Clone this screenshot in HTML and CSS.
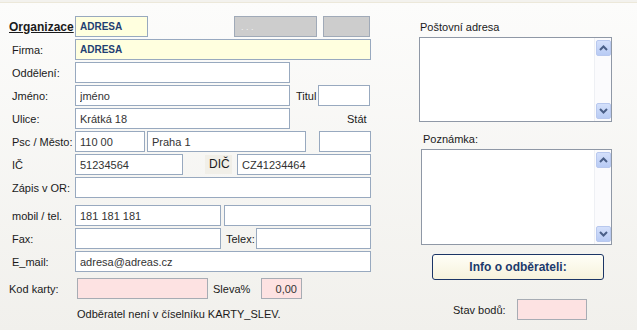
FILE: index.html
```html
<!DOCTYPE html>
<html lang="cs">
  <head>
    <meta charset="UTF-8" />
    <title>Odběratel</title>
    <link rel="stylesheet" href="styles.css">
  </head>
  <body>
    <div class="panel">
      <!-- levá část - adresa -->
      <div class="left">
        <div class="row">
          <label class="lbl lbl-main">Organizace</label>
          <input type="text" class="fld yellow w73" value="ADRESA" />
          <button class="grey-btn w83">. . .</button>
          <button class="grey-btn w47"></button>
        </div>
        <div class="row">
          <label class="lbl">Firma:</label>
          <input type="text" class="fld yellow w296" value="ADRESA" />
        </div>
        <div class="row">
          <label class="lbl">Oddělení:</label>
          <input type="text" class="fld w215" />
        </div>
        <div class="row">
          <label class="lbl">Jméno:</label>
          <input type="text" class="fld w215" value="jméno" />
          <span class="inl titul">Titul</span>
          <input type="text" class="fld w52" />
        </div>
        <div class="row">
          <label class="lbl">Ulice:</label>
          <input type="text" class="fld w215" value="Krátká 18" />
          <span class="inl stat">Stát</span>
        </div>
        <div class="row">
          <label class="lbl">Psc / Město:</label>
          <input type="text" class="fld w70" value="110 00" />
          <input type="text" class="fld w159 ml2" value="Praha 1" />
          <input type="text" class="fld w52 ml13" />
        </div>
        <div class="row">
          <label class="lbl">IČ</label>
          <input type="text" class="fld w108" value="51234564" />
          <span class="inl dic">DIČ</span>
          <input type="text" class="fld w134" value="CZ41234464" />
        </div>
        <div class="row">
          <label class="lbl">Zápis v OR:</label>
          <input type="text" class="fld w296" />
        </div>

        <div class="row gap-top">
          <label class="lbl">mobil / tel.</label>
          <input type="text" class="fld w146" value="181 181 181" />
          <input type="text" class="fld w147 ml3" />
        </div>
        <div class="row">
          <label class="lbl">Fax:</label>
          <input type="text" class="fld w146" />
          <span class="inl telex">Telex:</span>
          <input type="text" class="fld w115" />
        </div>
        <div class="row">
          <label class="lbl">E_mail:</label>
          <input type="text" class="fld w296" value="adresa@adreas.cz" />
        </div>

        <div class="row karta-row">
          <label class="lbl lbl-karta">Kod karty:</label>
          <input type="text" class="fld pink w131" />
          <span class="inl sleva">Sleva%</span>
          <input type="text" class="fld pink w41 num" value="0,00" />
        </div>
        <div class="note">Odběratel není v číselníku KARTY_SLEV.</div>
      </div>

      <!-- pravá část - poznámky -->
      <div class="right">
        <div class="memo-label">Poštovní adresa</div>
        <div class="memo memo-post">
          <textarea></textarea>
          <div class="vscroll">
            <span class="sbtn">
              <svg width="9" height="6" viewBox="0 0 9 6"><path d="M1 5 L4.5 1.5 L8 5" fill="none" stroke="#4a5f88" stroke-width="2"/></svg>
            </span>
            <span class="sbtn">
              <svg width="9" height="6" viewBox="0 0 9 6"><path d="M1 1 L4.5 4.5 L8 1" fill="none" stroke="#4a5f88" stroke-width="2"/></svg>
            </span>
          </div>
        </div>

        <div class="memo-label second">Poznámka:</div>
        <div class="memo memo-note">
          <textarea></textarea>
          <div class="vscroll">
            <span class="sbtn">
              <svg width="9" height="6" viewBox="0 0 9 6"><path d="M1 5 L4.5 1.5 L8 5" fill="none" stroke="#4a5f88" stroke-width="2"/></svg>
            </span>
            <span class="sbtn">
              <svg width="9" height="6" viewBox="0 0 9 6"><path d="M1 1 L4.5 4.5 L8 1" fill="none" stroke="#4a5f88" stroke-width="2"/></svg>
            </span>
          </div>
        </div>

        <button class="info-btn">Info o odběrateli:</button>

        <div class="body-row">
          <span>Stav bodů:</span>
          <input type="text" class="fld pink w70" />
        </div>
      </div>
    </div>
  </body>
</html>
```

FILE: styles.css
```css
* {
  box-sizing: border-box;
}

body {
  margin: 0;
  font-family: "Liberation Sans", Arial, sans-serif;
  font-size: 11px;
  color: #1a1a1a;
  background: #f3f2ee;
}

.panel {
  display: flex;
  height: 330px;
  margin-top: 2px;
  border-top: 1px solid #ece8da;
  background: linear-gradient(#fcfcfb, #f1f0ec);
}

.left {
  width: 419px;
  padding: 13px 0 0 8px;
}

.row {
  display: flex;
  align-items: center;
  height: 21px;
  margin-bottom: 2px;
}

.gap-top {
  margin-top: 7px;
}

.lbl {
  width: 67px;
  padding-left: 4px;
  flex-shrink: 0;
}

.lbl-main {
  padding-left: 1px;
  font-size: 12px;
  font-weight: bold;
  text-decoration: underline;
}

.lbl-karta {
  padding-left: 1px;
}

.fld {
  height: 21px;
  border: 1px solid #98a9bf;
  background: #fff;
  font-family: "Liberation Sans", Arial, sans-serif;
  font-size: 11px;
  color: #333;
  padding: 0 4px;
  margin: 0;
  outline: none;
}

.yellow {
  background: #ffffdf;
  font-weight: bold;
  font-size: 10px;
  color: #1f3f73;
}

.pink {
  background: #fde2e2;
  border-color: #a7acb4;
}

.num {
  text-align: right;
}

.w41 { width: 41px; }
.w52 { width: 52px; }
.w70 { width: 70px; }
.w73 { width: 73px; }
.w108 { width: 108px; }
.w115 { width: 115px; }
.w131 { width: 131px; }
.w134 { width: 134px; }
.w146 { width: 146px; }
.w147 { width: 147px; }
.w159 { width: 159px; }
.w215 { width: 215px; }
.w296 { width: 296px; }

.ml2 { margin-left: 2px; }
.ml3 { margin-left: 3px; }
.ml13 { margin-left: 13px; }

.grey-btn {
  height: 21px;
  border: 1px solid #a0aab8;
  background: #cdcdcd;
  color: #f2f2f2;
  font-family: "Liberation Sans", Arial, sans-serif;
  font-size: 9px;
  text-align: left;
  padding: 0 6px;
}

.w83 {
  width: 83px;
  margin-left: 86px;
}

.w47 {
  width: 47px;
  margin-left: 6px;
}

.inl {
  white-space: nowrap;
}

.titul {
  width: 28px;
  padding-left: 6px;
}

.stat {
  margin-left: 57px;
}

.dic {
  width: 27px;
  height: 19px;
  margin-left: 22px;
  margin-right: 5px;
  font-size: 12px;
  line-height: 19px;
  background: #f1efe8;
  padding-left: 4px;
}

.telex {
  width: 35px;
  padding-left: 5px;
}

.karta-row {
  margin-top: 6px;
}

.karta-row .lbl {
  width: 69px;
}

.sleva {
  width: 53px;
  padding-left: 5px;
}

.note {
  padding-left: 69px;
  margin-top: 7px;
  line-height: 16px;
}

.right {
  width: 194px;
  padding-top: 16px;
}

.memo-label {
  line-height: 16px;
  padding-left: 1px;
  margin-bottom: 2px;
}

.memo-label.second {
  margin-top: 9px;
  padding-left: 4px;
}

.memo {
  display: flex;
  border: 1px solid #8f98a6;
  background: #fff;
}

.memo-post {
  width: 193px;
  height: 85px;
}

.memo-note {
  width: 191px;
  height: 96px;
  margin-left: 2px;
}

.memo textarea {
  flex: 1;
  border: none;
  resize: none;
  outline: none;
  font-family: "Liberation Sans", Arial, sans-serif;
  font-size: 11px;
}

.vscroll {
  width: 17px;
  display: flex;
  flex-direction: column;
  justify-content: space-between;
  padding: 2px 1px 2px 1px;
  border-left: 1px solid #eef0f4;
  background: #fbfbfd;
}

.sbtn {
  display: flex;
  align-items: center;
  justify-content: center;
  width: 15px;
  height: 16px;
  border: 1px solid #b8c8ee;
  border-radius: 2px;
  background: linear-gradient(#d4e0fb, #b8cbf4);
}

.info-btn {
  display: block;
  width: 172px;
  height: 26px;
  margin: 9px 0 0 13px;
  border: 1px solid #1b3566;
  border-radius: 3px;
  background: linear-gradient(#fffef7, #f6f2dc);
  color: #1c3a6c;
  font-family: "Liberation Sans", Arial, sans-serif;
  font-size: 12px;
  font-weight: bold;
  cursor: pointer;
}

.body-row {
  display: flex;
  align-items: center;
  gap: 11px;
  margin: 19px 0 0 34px;
}
```
